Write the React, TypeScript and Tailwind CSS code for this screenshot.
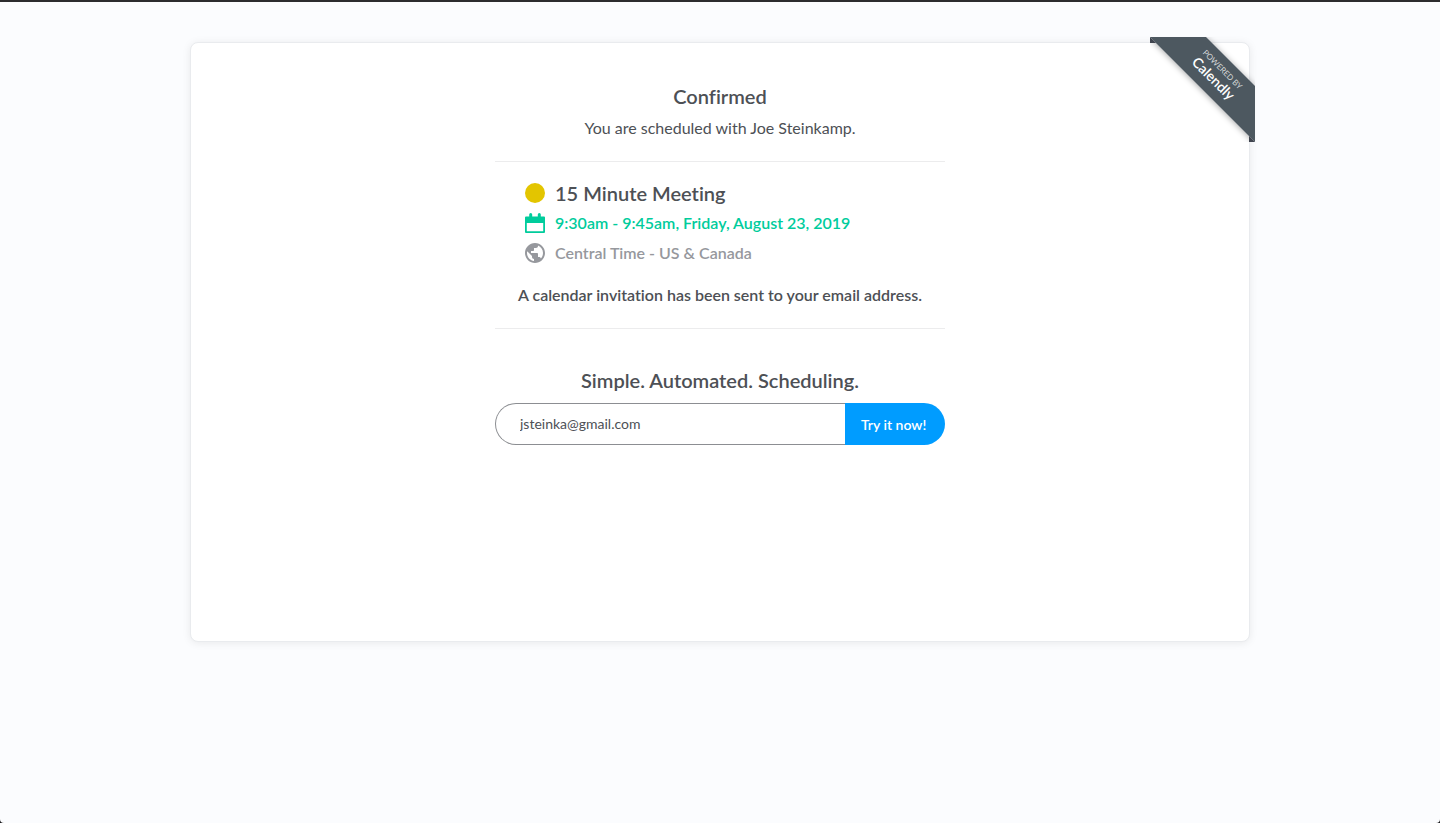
import { useState } from "react";

function Ribbon() {
  return (
    <a
      href="#calendly"
      className="absolute -top-1.5 -right-1.5 block size-[105px] overflow-hidden text-white"
    >
      <svg viewBox="0 0 105 105" className="size-full" aria-hidden="true">
        <defs>
          <filter id="ribbon-shadow" x="-20%" y="-20%" width="140%" height="140%">
            <feDropShadow dx="0" dy="1" stdDeviation="3" floodColor="#000" floodOpacity="0.35" />
          </filter>
        </defs>
        <g filter="url(#ribbon-shadow)">
          <path d="M0 0h56l49 49v56z" fill="#4d5860" />
        </g>
        <path d="M0 0v6h6zM105 105h-6v-6z" fill="#40454f" />
      </svg>
      <span className="absolute top-[25px] left-8 flex h-[26px] w-[70px] rotate-45 flex-col items-center whitespace-nowrap">
        <span className="text-[8px] leading-[10px] text-[#d5d8da]">POWERED BY</span>
        <span className="text-[14px] leading-4 font-semibold">Calendly</span>
      </span>
    </a>
  );
}

function CalendarIcon() {
  return (
    <svg viewBox="0 0 20 20" className="size-5 shrink-0" fill="currentColor" aria-hidden="true">
      <path
        fillRule="evenodd"
        d="M4.200 1.500a1.500 1.500 0 0 1 3 0v2h5.600v-2a1.500 1.500 0 0 1 3 0v2H19a1 1 0 0 1 1 1V19a1 1 0 0 1-1 1H1a1 1 0 0 1-1-1V4.500a1 1 0 0 1 1-1h3.200zM1.800 10v8.200h16.400V10z"
      />
    </svg>
  );
}

function GlobeIcon() {
  return (
    <svg viewBox="2 2 20 20" className="size-5 shrink-0" fill="currentColor" aria-hidden="true">
      <path d="M12 2C6.480 2 2 6.480 2 12s4.480 10 10 10 10-4.480 10-10S17.520 2 12 2zm-1 17.930c-3.950-.49-7-3.850-7-7.930 0-.62.080-1.210.21-1.790L9 15v1c0 1.100.9 2 2 2v1.930zm6.900-2.540c-.26-.81-1-1.390-1.900-1.390h-1v-3c0-.55-.45-1-1-1H8v-2h2c.55 0 1-.45 1-1V7h2c1.100 0 2-.9 2-2v-.41c2.930 1.190 5 4.060 5 7.410 0 2.080-.8 3.970-2.100 5.390z" />
    </svg>
  );
}

export default function App() {
  const [email, setEmail] = useState("jsteinka@gmail.com");

  return (
    <div className="bg-[#1a1a1c]">
      <div className="min-h-screen rounded-b-[4px] border-t-2 border-[#2c2c2e] bg-[#fbfcfe] px-5 pt-10 font-['Lato',sans-serif] text-[#4d5055] [font-variant-ligatures:none]">
        <main className="relative mx-auto flex min-h-[600px] max-w-[1060px] flex-col items-center rounded-lg border border-[#e9ebee] bg-white px-5 pt-[39px] pb-10 shadow-[0_1px_8px_rgba(0,0,0,0.08)]">
          <Ribbon />
          <div className="w-full max-w-[450px]">
            <header className="border-b border-[#ececed] pb-[21px] text-center">
              <h1 className="text-[20px] leading-7 font-semibold">Confirmed</h1>
              <p className="mt-1.5 text-[16px] leading-6">You are scheduled with Joe Steinkamp.</p>
            </header>

            <section className="border-b border-[#ececed] pt-4 pb-[21px]">
              <ul className="px-[30px]">
                <li className="flex h-[30px] items-center gap-2.5">
                  <span className="size-5 shrink-0 rounded-full bg-[#e3c500]" />
                  <h2 className="text-[20px] leading-7 font-semibold">15 Minute Meeting</h2>
                </li>
                <li className="flex h-[30px] items-center gap-2.5 text-[16px] font-semibold text-[#00cc9c]">
                  <CalendarIcon />
                  9:30am - 9:45am, Friday, August 23, 2019
                </li>
                <li className="flex h-[30px] items-center gap-2.5 text-[16px] font-semibold text-[#96989d]">
                  <GlobeIcon />
                  Central Time - US &amp; Canada
                </li>
              </ul>
              <p className="mt-[15px] text-center text-[16px] leading-6 font-semibold">
                A calendar invitation has been sent to your email address.
              </p>
            </section>

            <section className="pt-[37px]">
              <h2 className="text-center text-[20px] leading-7 font-semibold">
                Simple. Automated. Scheduling.
              </h2>
              <form className="mt-[9px] flex h-[42px]" onSubmit={(event) => event.preventDefault()}>
                <input
                  type="email"
                  aria-label="Email address"
                  value={email}
                  onChange={(event) => setEmail(event.target.value)}
                  className="min-w-0 flex-1 rounded-l-full border border-r-0 border-[#8c8e92] bg-white px-6 pb-0.5 text-[14px] outline-none"
                />
                <button
                  type="submit"
                  className="w-[100px] rounded-r-full bg-[#009cff] px-4 text-left text-[14px] font-semibold text-white"
                >
                  Try it now!
                </button>
              </form>
            </section>
          </div>
        </main>
      </div>
    </div>
  );
}
